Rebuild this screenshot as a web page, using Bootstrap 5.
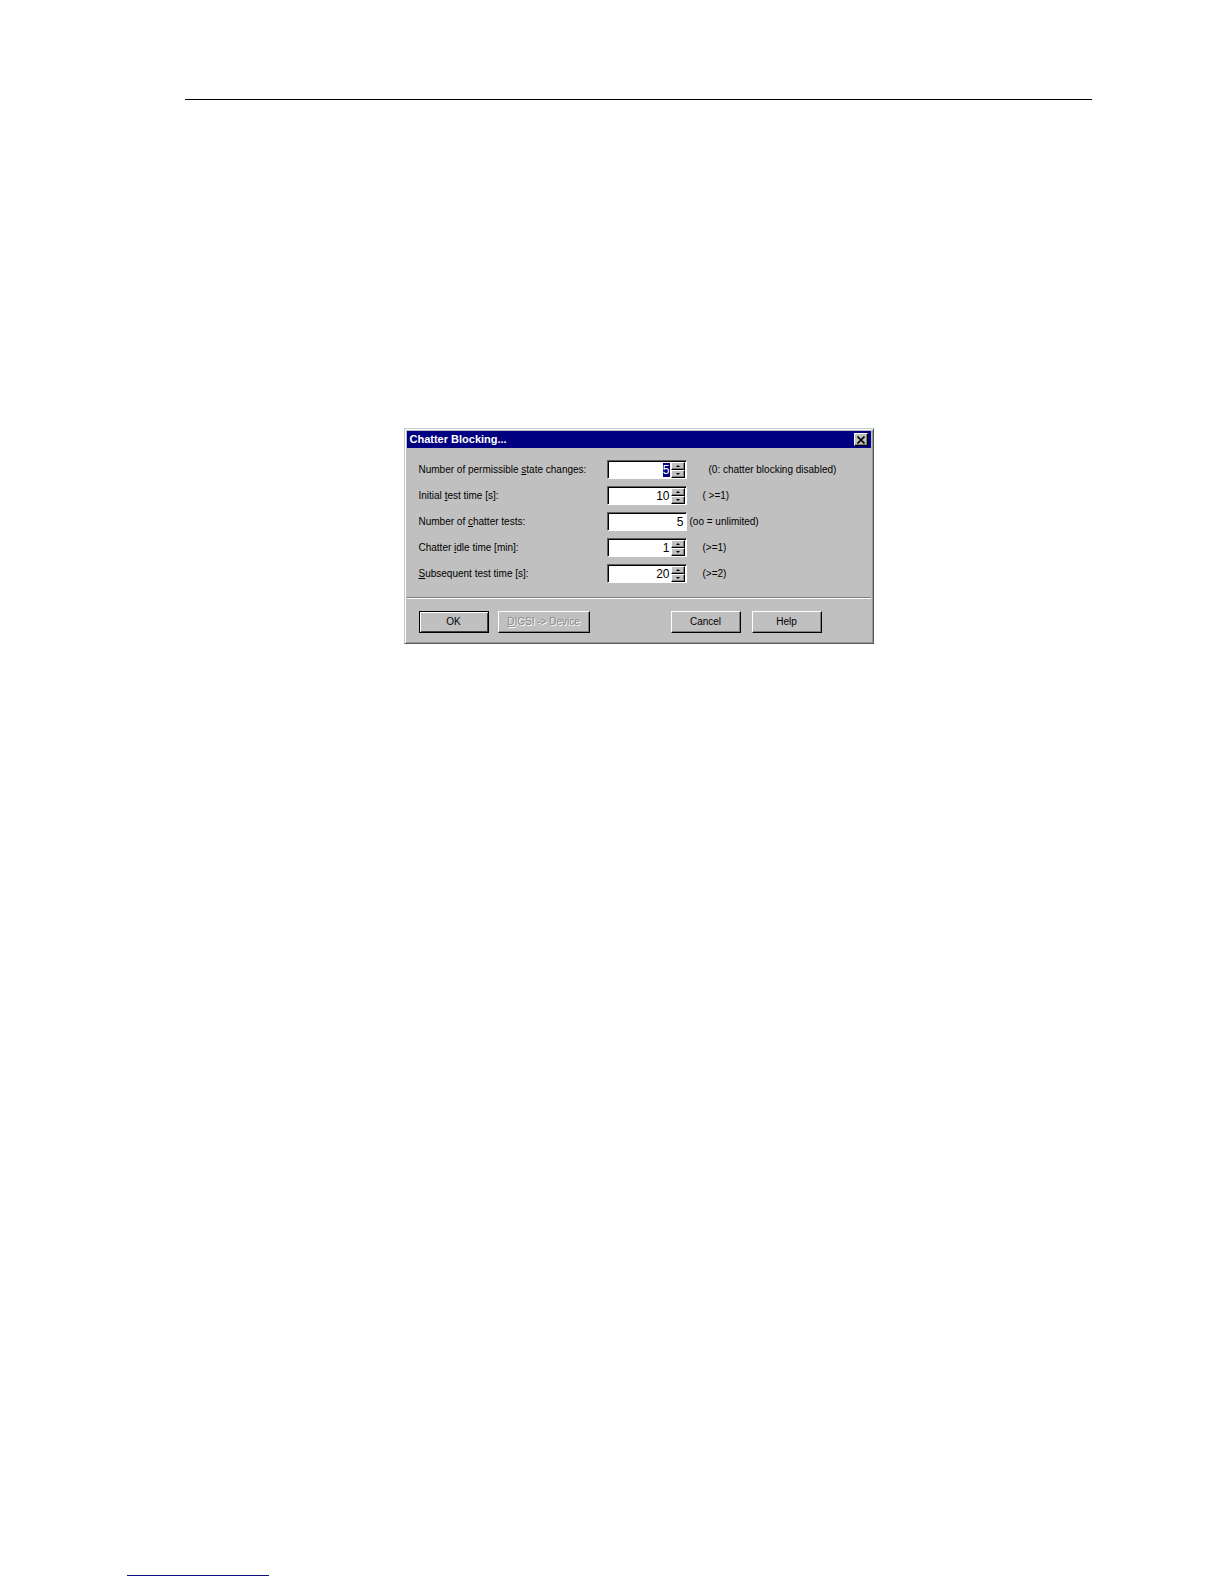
<!DOCTYPE html>
<html lang="en">
<head>
<meta charset="utf-8">
<meta name="viewport" content="width=device-width, initial-scale=1">
<title>Chatter Blocking</title>
<link href="https://cdn.jsdelivr.net/npm/bootstrap@5.3.0/dist/css/bootstrap.min.css" rel="stylesheet">
<style>
  .sheet { padding: 99px 132px 8px 185px; }
  .page-rule { border-top: 1px solid #000; }
  .foot-rule { width: 142px; height: 1px; margin-left: -58px; background: #10107c; }
  .dialog { width: 100%; max-width: 470px; margin-top: 328px; background: #c0c0c0; color: #000;
    font: 10px/16px "Liberation Sans", Arial, sans-serif;
    border: 1px solid; border-color: #c3ccd4 #55555c #55555c #c3ccd4;
    box-shadow: inset 1px 1px #fff, inset -1px -1px #999; padding: 2px 2px 10px; }
  .caption-bar { height: 17px; background: #000080; color: #fff; padding: 0 3px; }
  .caption-bar h1 { font: bold 11px/17px "Liberation Sans", sans-serif; }
  .face { background: #c0c0c0; border: 1px solid; border-color: #fff #000 #000 #fff;
    box-shadow: inset -1px -1px #808080; color: #000; padding: 0; }
  .close-box { width: 14px; height: 13px; }
  .close-box svg, .spin svg { display: block; margin: auto; }
  .fields { padding: 12px 12px 14px; gap: 7px; }
  .field-label { width: 188px; }
  .entry { width: 80px; height: 19px; background: #fff; border: 1px solid;
    border-color: #606060 #fff #fff #606060; box-shadow: inset 1px 1px #000; padding: 1px 1px 0 2px; }
  .entry input { width: 0; min-width: 0; border: 0; outline: 0; background: transparent; color: #000; padding: 0 1px 0 0;
    font: 12px/14px "Liberation Sans", sans-serif; text-align: right; height: 16px; }
  .entry input::selection { background: #000080; color: #fff; }
  .spin { width: 14px; }
  .spin button { height: 8px; }
  .hint-wide { margin-left: 22px; }
  .hint-mid { margin-left: 16px; }
  .hint-near { margin-left: 3px; }
  .groove { border-top: 1px solid #808080; border-bottom: 1px solid #fff; }
  .actions { padding: 12px 49px 0 12px; }
  .push { width: 70px; height: 22px; line-height: 18px; white-space: nowrap; }
  .push-wide { width: 92px; margin-left: 9px; }
  .push-default { border-color: #000; box-shadow: inset 1px 1px #fff, inset -1px -1px #404040; }
  .push:disabled { color: #888; text-shadow: 1px 1px #fff; }
  .push-gap { gap: 11px; }
</style>
<script src="https://cdn.jsdelivr.net/npm/bootstrap@5.3.0/dist/js/bootstrap.bundle.min.js"></script>
</head>
<body class="bg-white">
<div class="sheet min-vh-100 d-flex flex-column">
  <div class="page-rule"></div>
  <main class="dialog mx-auto" role="dialog" aria-labelledby="dialogTitle">
    <header class="caption-bar d-flex align-items-center justify-content-between">
      <h1 class="m-0" id="dialogTitle">Chatter Blocking...</h1>
      <button type="button" class="face close-box" aria-label="Close">
        <svg width="8" height="8" viewBox="0 0 8 8" stroke="#000" stroke-width="1.6"><path d="M0.5 0.5 7.5 7.5M7.5 0.5 0.5 7.5"/></svg>
      </button>
    </header>
    <form>
      <div class="fields d-flex flex-column">
        <div class="d-flex align-items-center">
          <label class="field-label flex-shrink-0" for="changes">Number of permissible <u>s</u>tate changes:</label>
          <div class="entry d-flex flex-shrink-0"><input class="flex-fill" id="changes" type="text" value="5">
            <div class="spin d-flex flex-column flex-shrink-0"><button type="button" class="face" aria-label="Increase"><svg width="4" height="2"><path d="M0 2 2 0 4 2z"/></svg></button><button type="button" class="face" aria-label="Decrease"><svg width="4" height="2"><path d="M0 0 2 2 4 0z"/></svg></button></div></div>
          <span class="hint-wide">(0: chatter blocking disabled)</span>
        </div>
        <div class="d-flex align-items-center">
          <label class="field-label flex-shrink-0" for="initial">Initial <u>t</u>est time [s]:</label>
          <div class="entry d-flex flex-shrink-0"><input class="flex-fill" id="initial" type="text" value="10">
            <div class="spin d-flex flex-column flex-shrink-0"><button type="button" class="face" aria-label="Increase"><svg width="4" height="2"><path d="M0 2 2 0 4 2z"/></svg></button><button type="button" class="face" aria-label="Decrease"><svg width="4" height="2"><path d="M0 0 2 2 4 0z"/></svg></button></div></div>
          <span class="hint-mid">( &gt;=1)</span>
        </div>
        <div class="d-flex align-items-center">
          <label class="field-label flex-shrink-0" for="tests">Number of <u>c</u>hatter tests:</label>
          <div class="entry d-flex flex-shrink-0"><input class="flex-fill" id="tests" type="text" value="5"></div>
          <span class="hint-near">(oo = unlimited)</span>
        </div>
        <div class="d-flex align-items-center">
          <label class="field-label flex-shrink-0" for="idle">Chatter <u>i</u>dle time [min]:</label>
          <div class="entry d-flex flex-shrink-0"><input class="flex-fill" id="idle" type="text" value="1">
            <div class="spin d-flex flex-column flex-shrink-0"><button type="button" class="face" aria-label="Increase"><svg width="4" height="2"><path d="M0 2 2 0 4 2z"/></svg></button><button type="button" class="face" aria-label="Decrease"><svg width="4" height="2"><path d="M0 0 2 2 4 0z"/></svg></button></div></div>
          <span class="hint-mid">(&gt;=1)</span>
        </div>
        <div class="d-flex align-items-center">
          <label class="field-label flex-shrink-0" for="subsequent"><u>S</u>ubsequent test time [s]:</label>
          <div class="entry d-flex flex-shrink-0"><input class="flex-fill" id="subsequent" type="text" value="20">
            <div class="spin d-flex flex-column flex-shrink-0"><button type="button" class="face" aria-label="Increase"><svg width="4" height="2"><path d="M0 2 2 0 4 2z"/></svg></button><button type="button" class="face" aria-label="Decrease"><svg width="4" height="2"><path d="M0 0 2 2 4 0z"/></svg></button></div></div>
          <span class="hint-mid">(&gt;=2)</span>
        </div>
      </div>
      <div class="groove"></div>
      <div class="actions d-flex">
        <button type="button" class="face push push-default">OK</button>
        <button type="button" class="face push push-wide" disabled><u>D</u>IGSI -&gt; Device</button>
        <div class="push-gap d-flex ms-auto">
          <button type="button" class="face push">Cancel</button>
          <button type="button" class="face push">Help</button>
        </div>
      </div>
    </form>
  </main>
  <div class="foot-rule mt-auto"></div>
</div>
<script>
  const first = document.getElementById('changes');
  first.focus();
  first.select();
</script>
</body>
</html>
